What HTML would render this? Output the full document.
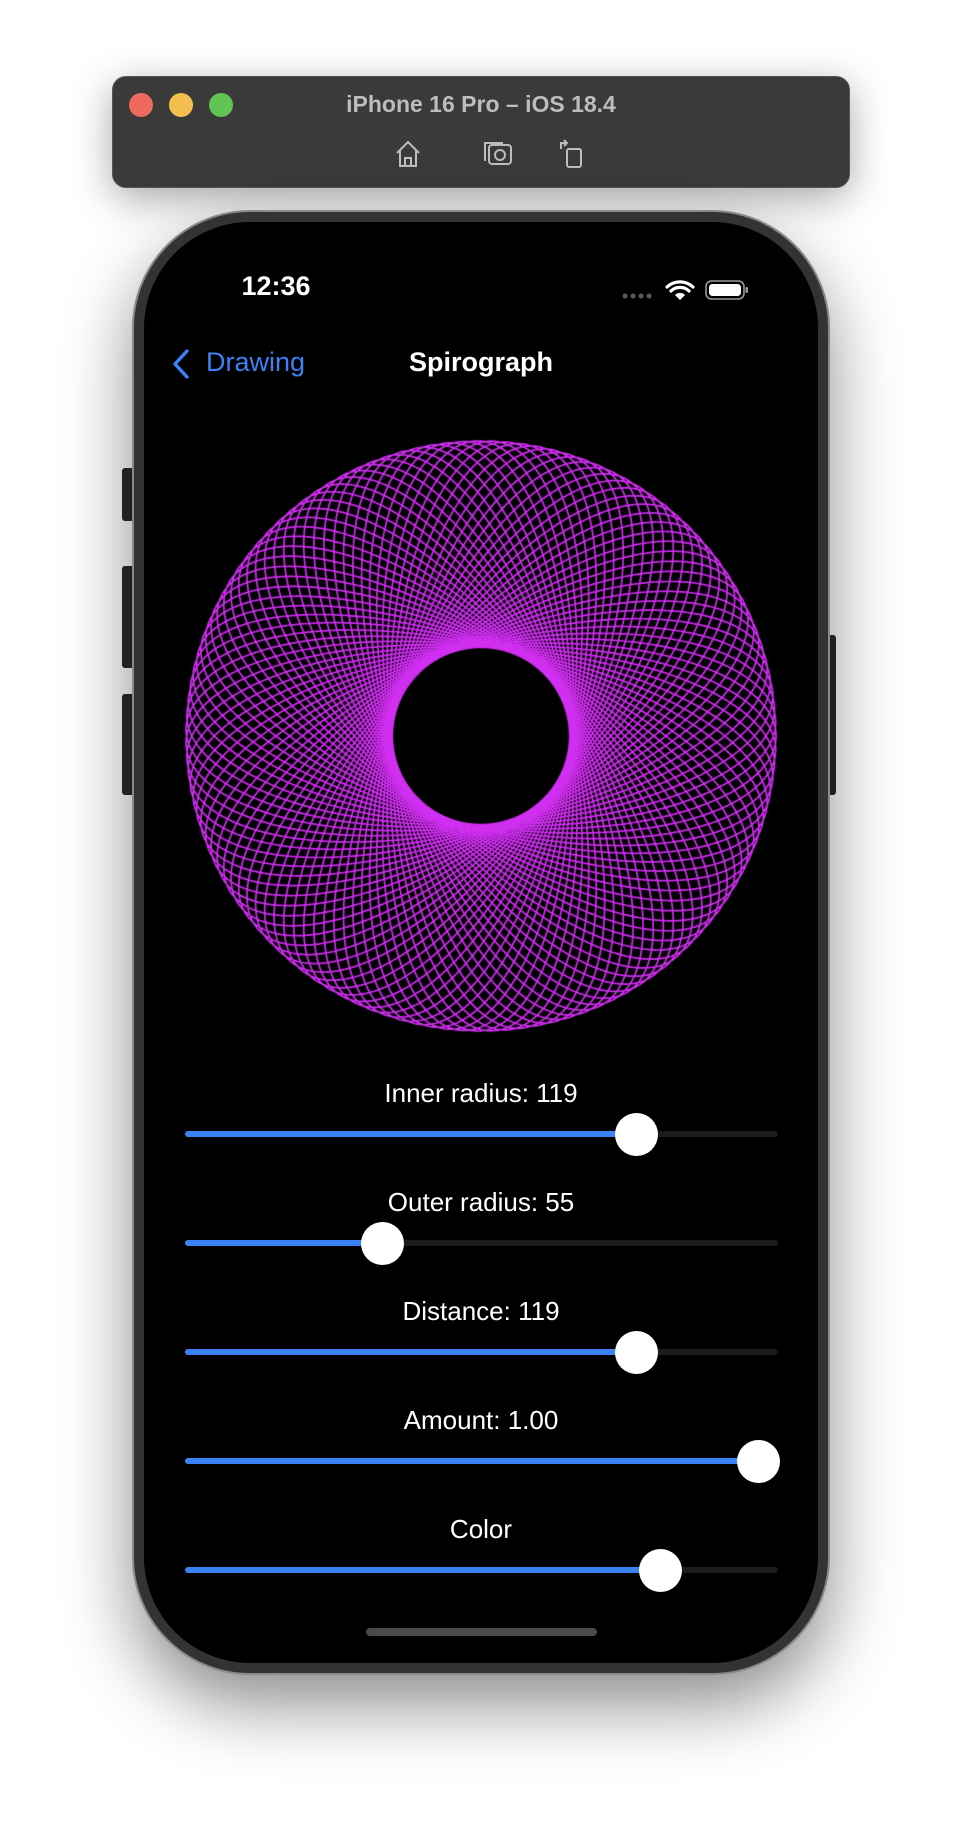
<!DOCTYPE html>
<html><head><meta charset="utf-8"><style>
*{margin:0;padding:0;box-sizing:border-box}
html,body{width:962px;height:1826px;background:#fff;overflow:hidden;font-family:"Liberation Sans",sans-serif}
.win{position:absolute;left:112px;top:76px;width:738px;height:112px;background:#3a3a3a;border-radius:14px;box-shadow:0 10px 40px rgba(0,0,0,.35);border:1px solid #555}
.tl{position:absolute;top:16px;width:24px;height:24px;border-radius:50%}
.title{position:absolute;left:0;right:0;top:14px;text-align:center;color:#bdbdbd;font-weight:bold;font-size:23px}
.phone{position:absolute;left:132px;top:210px;width:698px;height:1465px;background:#333;border-radius:118px;box-shadow:0 30px 70px rgba(0,0,0,.45);border:2px solid #8a8a8a}
.screen{position:absolute;left:10px;top:10px;right:10px;bottom:10px;background:#000;border-radius:106px;overflow:hidden}
.btn{position:absolute;background:#2a2a2a;border-radius:3px}
.lbl{position:absolute;left:0;width:962px;text-align:center;color:#fff;font-size:26px}
.track{position:absolute;left:185px;width:593px;height:6px;border-radius:3px;background:#1c1c1e}
.fill{position:absolute;left:0;top:0;height:6px;border-radius:3px;background:#3b82f6}
.thumb{position:absolute;width:43px;height:43px;border-radius:50%;background:#fff;top:-18px;margin-left:-21px}
</style></head><body>
<div class="win">
<div class="tl" style="left:16px;background:#ee6a5e"></div>
<div class="tl" style="left:56px;background:#f5bf4f"></div>
<div class="tl" style="left:96px;background:#61c454"></div>
<div class="title">iPhone 16 Pro – iOS 18.4</div>
<svg style="position:absolute;left:280px;top:60px" width="200" height="34" viewBox="0 0 200 34" fill="none" stroke="#bdbdbd" stroke-width="2">
<path d="M4 16 L15 5 L26 16 M7 13 V29 H23 V13 M12 29 V21 H18 V29"/>
<rect x="96" y="8" width="22" height="19" rx="3"/><path d="M92 24 V6 H110"/><circle cx="107" cy="18" r="5"/>
<rect x="174" y="12" width="14" height="18" rx="2"/><path d="M168 12 V6 h6 M171 3 l3 3 -3 3"/>
</svg>
</div>
<div class="btn" style="left:122px;top:468px;width:12px;height:53px"></div>
<div class="btn" style="left:122px;top:566px;width:12px;height:102px"></div>
<div class="btn" style="left:122px;top:694px;width:12px;height:101px"></div>
<div class="btn" style="left:828px;top:635px;width:8px;height:160px"></div>
<div class="phone"><div class="screen"></div></div>
<div style="position:absolute;left:0;top:271px;width:552px;text-align:center;color:#fff;font-weight:bold;font-size:27px">12:36</div>
<svg style="position:absolute;left:620px;top:278px" width="130" height="24" viewBox="0 0 130 24">
<g fill="#555"><circle cx="5" cy="18" r="2.6"/><circle cx="13" cy="18" r="2.6"/><circle cx="21" cy="18" r="2.6"/><circle cx="29" cy="18" r="2.6"/></g>
<path d="M47 9 a19 19 0 0 1 26 0 M51 13 a13 13 0 0 1 18 0" stroke="#fff" stroke-width="3.2" fill="none" stroke-linecap="round"/><path d="M55 17 L60 22 L65 17 a7 7 0 0 0 -10 0z" fill="#fff"/>
<rect x="86" y="3" width="38" height="18" rx="5.5" fill="none" stroke="#9a9a9a" stroke-width="1.6"/><rect x="89" y="6" width="32" height="12" rx="3.5" fill="#fff"/><rect x="125.5" y="9" width="2.5" height="6" rx="1" fill="#9a9a9a"/>
</svg>
<svg style="position:absolute;left:170px;top:348px" width="22" height="32" viewBox="0 0 22 32"><path d="M17 3 L5 16 L17 29" stroke="#3b82f6" stroke-width="3.4" fill="none" stroke-linecap="round" stroke-linejoin="round"/></svg>
<div style="position:absolute;left:206px;top:347px;color:#3b82f6;font-size:27px">Drawing</div>
<div style="position:absolute;left:0;width:962px;top:347px;text-align:center;color:#fff;font-weight:bold;font-size:27px">Spirograph</div>
<canvas id="c" width="640" height="640" style="position:absolute;left:161px;top:416px"></canvas>
<div class="lbl" style="top:1078px">Inner radius: 119</div>
<div class="track" style="top:1131px"><div class="fill" style="width:451px"></div><div class="thumb" style="left:451px"></div></div>
<div class="lbl" style="top:1187px">Outer radius: 55</div>
<div class="track" style="top:1240px"><div class="fill" style="width:197px"></div><div class="thumb" style="left:197px"></div></div>
<div class="lbl" style="top:1296px">Distance: 119</div>
<div class="track" style="top:1349px"><div class="fill" style="width:451px"></div><div class="thumb" style="left:451px"></div></div>
<div class="lbl" style="top:1405px">Amount: 1.00</div>
<div class="track" style="top:1458px"><div class="fill" style="width:593px"></div><div class="thumb" style="left:573px"></div></div>
<div class="lbl" style="top:1514px">Color</div>
<div class="track" style="top:1567px"><div class="fill" style="width:475px"></div><div class="thumb" style="left:475px"></div></div>
<div style="position:absolute;left:366px;top:1628px;width:231px;height:8px;border-radius:4px;background:#4a4a4a"></div>
<script>
var c=document.getElementById('c').getContext('2d');
var R=119,r=55,d=119,diff=R-r,s=295/183,cx=320,cy=320;
var end=Math.ceil(2*Math.PI*r);
c.strokeStyle='#d02ef0';c.lineWidth=1.7;c.beginPath();
for(var t=0;t<=end;t+=0.01){
var x=diff*Math.cos(t)+d*Math.cos(diff/r*t);
var y=diff*Math.sin(t)-d*Math.sin(diff/r*t);
x=cx+x*s;y=cy+y*s;
if(t===0)c.moveTo(x,y);else c.lineTo(x,y);}
c.stroke();
</script>
</body></html>
